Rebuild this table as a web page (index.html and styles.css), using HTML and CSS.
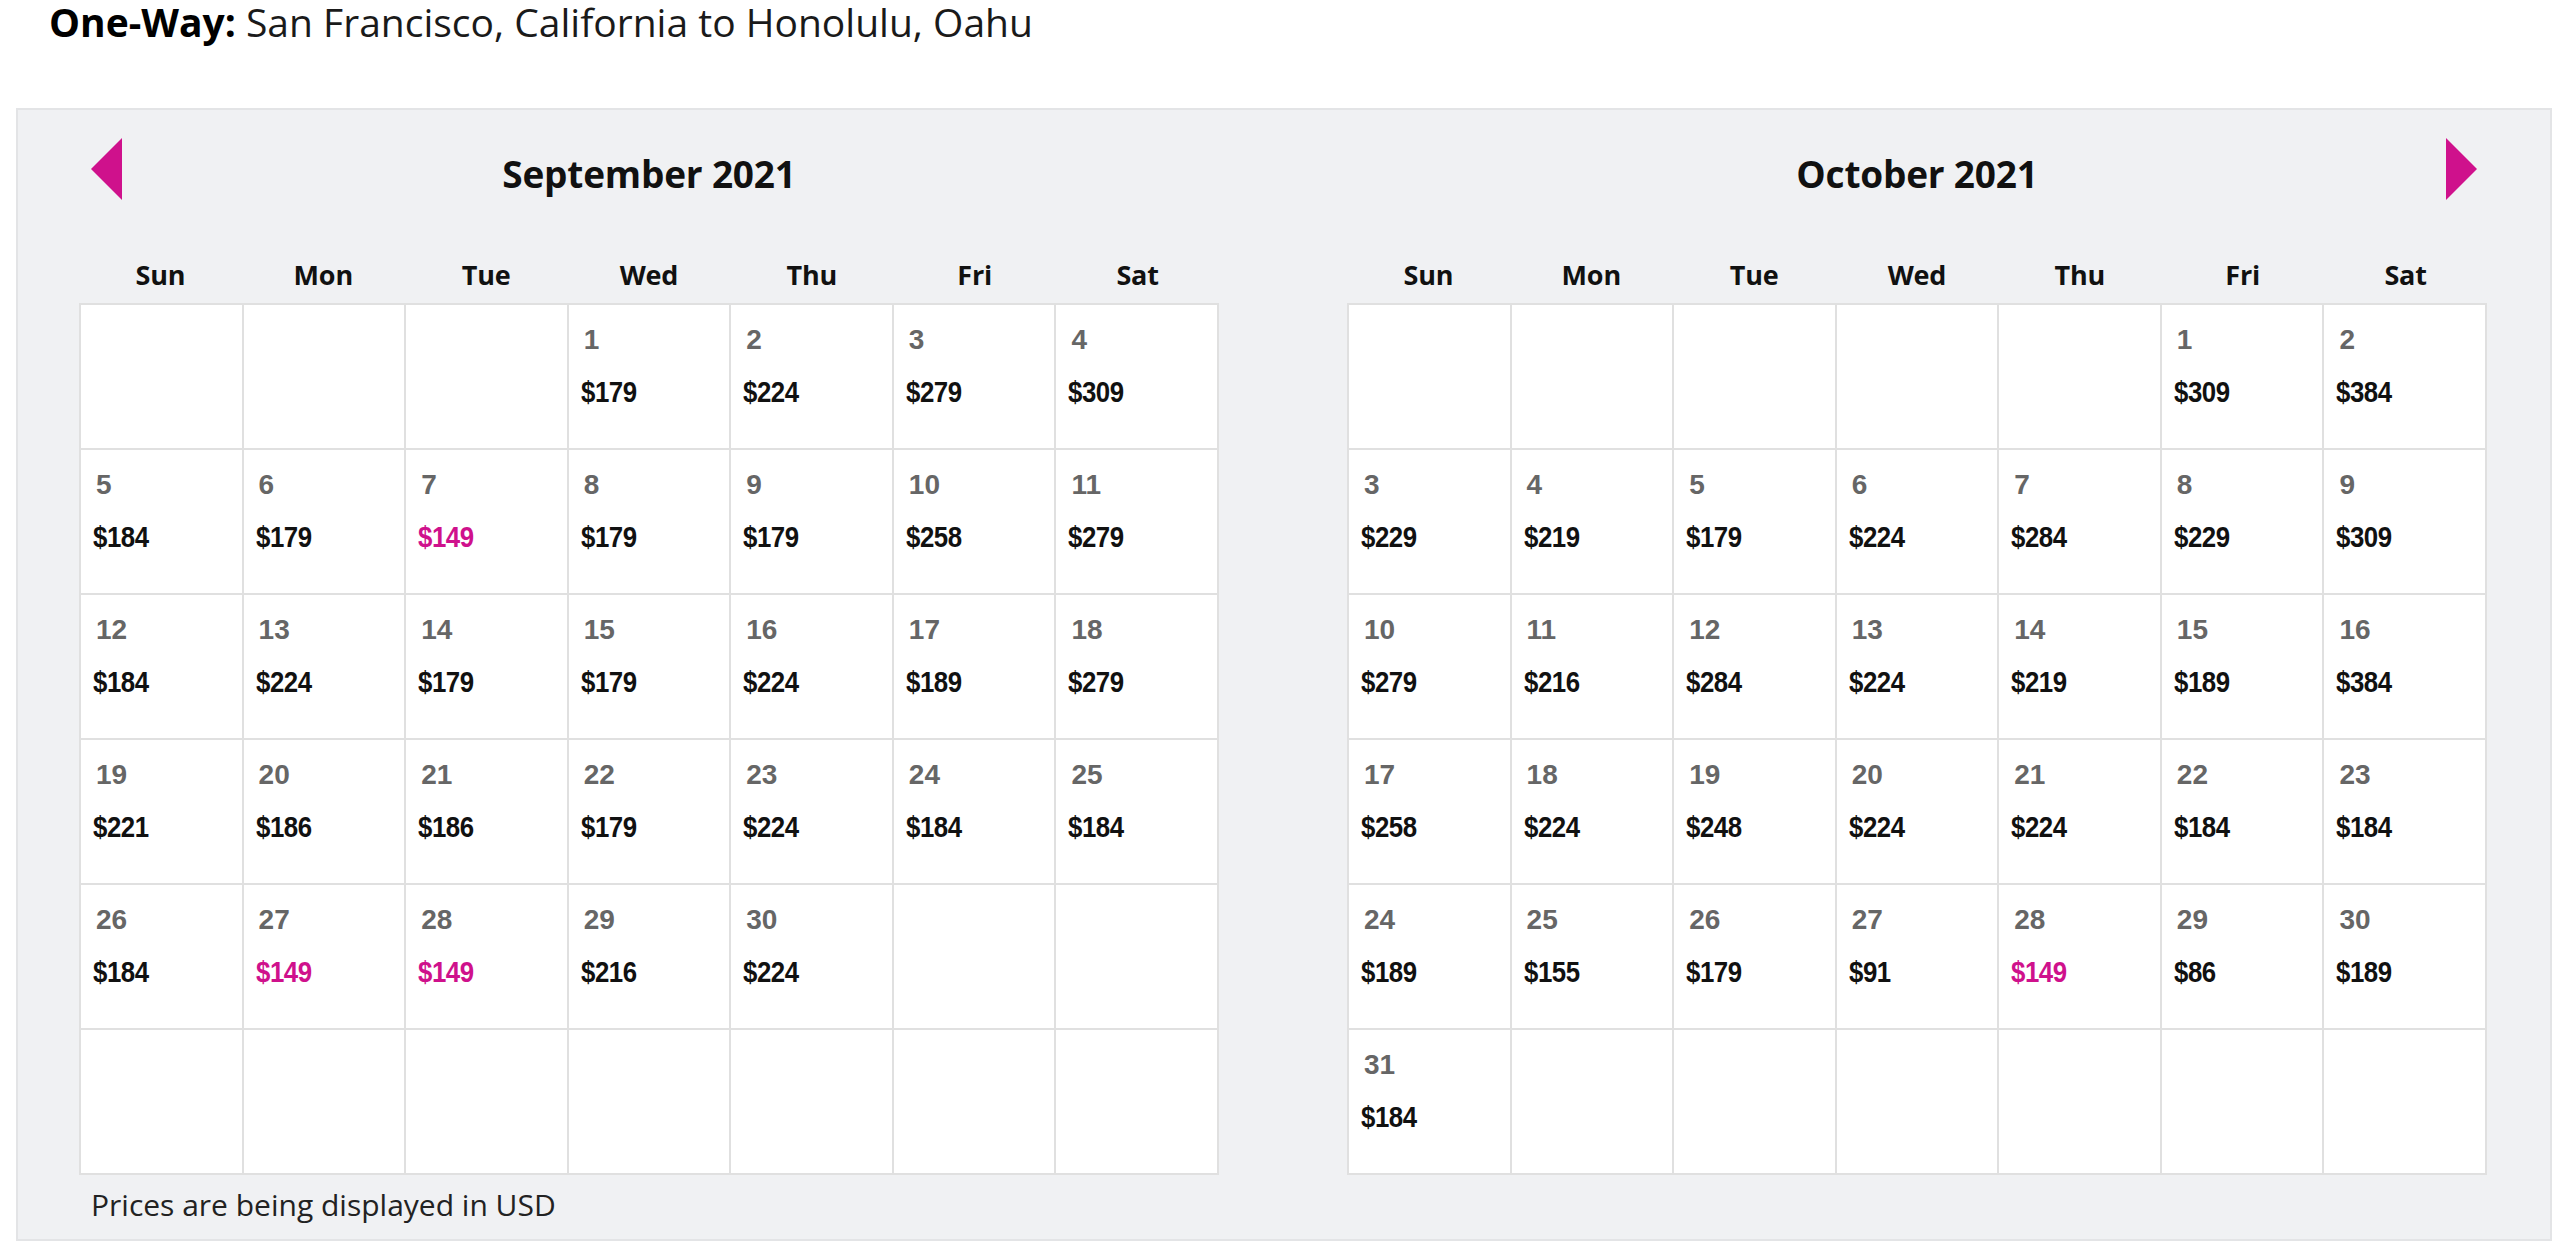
FILE: index.html
```html
<!DOCTYPE html>
<html lang="en">
<head>
<meta charset="utf-8">
<title>Low Fare Calendar</title>
<link rel="stylesheet" href="styles.css">
</head>
<body>
<h1 class="trip"><span class="trip-type">One-Way:</span> San Francisco, California to Honolulu, Oahu</h1>
<section class="panel">
  <div class="month">
    <div class="month-head">
      <span class="nav nav-prev"><svg width="31" height="62" viewBox="0 0 31 62"><polygon points="31,0 0,31 31,62" fill="#cf118c"/></svg></span>
      <h2 class="month-title">September 2021</h2>
      <span class="nav-space"></span>
    </div>
    <div class="dow"><span>Sun</span><span>Mon</span><span>Tue</span><span>Wed</span><span>Thu</span><span>Fri</span><span>Sat</span></div>
    <div class="grid">
      <div class="cell"></div><div class="cell"></div><div class="cell"></div>
      <div class="cell"><div class="d">1</div><div class="p">$179</div></div>
      <div class="cell"><div class="d">2</div><div class="p">$224</div></div>
      <div class="cell"><div class="d">3</div><div class="p">$279</div></div>
      <div class="cell"><div class="d">4</div><div class="p">$309</div></div>
      <div class="cell"><div class="d">5</div><div class="p">$184</div></div>
      <div class="cell"><div class="d">6</div><div class="p">$179</div></div>
      <div class="cell"><div class="d">7</div><div class="p low">$149</div></div>
      <div class="cell"><div class="d">8</div><div class="p">$179</div></div>
      <div class="cell"><div class="d">9</div><div class="p">$179</div></div>
      <div class="cell"><div class="d">10</div><div class="p">$258</div></div>
      <div class="cell"><div class="d">11</div><div class="p">$279</div></div>
      <div class="cell"><div class="d">12</div><div class="p">$184</div></div>
      <div class="cell"><div class="d">13</div><div class="p">$224</div></div>
      <div class="cell"><div class="d">14</div><div class="p">$179</div></div>
      <div class="cell"><div class="d">15</div><div class="p">$179</div></div>
      <div class="cell"><div class="d">16</div><div class="p">$224</div></div>
      <div class="cell"><div class="d">17</div><div class="p">$189</div></div>
      <div class="cell"><div class="d">18</div><div class="p">$279</div></div>
      <div class="cell"><div class="d">19</div><div class="p">$221</div></div>
      <div class="cell"><div class="d">20</div><div class="p">$186</div></div>
      <div class="cell"><div class="d">21</div><div class="p">$186</div></div>
      <div class="cell"><div class="d">22</div><div class="p">$179</div></div>
      <div class="cell"><div class="d">23</div><div class="p">$224</div></div>
      <div class="cell"><div class="d">24</div><div class="p">$184</div></div>
      <div class="cell"><div class="d">25</div><div class="p">$184</div></div>
      <div class="cell"><div class="d">26</div><div class="p">$184</div></div>
      <div class="cell"><div class="d">27</div><div class="p low">$149</div></div>
      <div class="cell"><div class="d">28</div><div class="p low">$149</div></div>
      <div class="cell"><div class="d">29</div><div class="p">$216</div></div>
      <div class="cell"><div class="d">30</div><div class="p">$224</div></div>
      <div class="cell"></div><div class="cell"></div>
      <div class="cell"></div><div class="cell"></div><div class="cell"></div><div class="cell"></div><div class="cell"></div><div class="cell"></div><div class="cell"></div>
    </div>
    <p class="note">Prices are being displayed in USD</p>
  </div>
  <div class="month">
    <div class="month-head">
      <span class="nav-space"></span>
      <h2 class="month-title">October 2021</h2>
      <span class="nav nav-next"><svg width="31" height="62" viewBox="0 0 31 62"><polygon points="0,0 31,31 0,62" fill="#cf118c"/></svg></span>
    </div>
    <div class="dow"><span>Sun</span><span>Mon</span><span>Tue</span><span>Wed</span><span>Thu</span><span>Fri</span><span>Sat</span></div>
    <div class="grid">
      <div class="cell"></div><div class="cell"></div><div class="cell"></div><div class="cell"></div><div class="cell"></div>
      <div class="cell"><div class="d">1</div><div class="p">$309</div></div>
      <div class="cell"><div class="d">2</div><div class="p">$384</div></div>
      <div class="cell"><div class="d">3</div><div class="p">$229</div></div>
      <div class="cell"><div class="d">4</div><div class="p">$219</div></div>
      <div class="cell"><div class="d">5</div><div class="p">$179</div></div>
      <div class="cell"><div class="d">6</div><div class="p">$224</div></div>
      <div class="cell"><div class="d">7</div><div class="p">$284</div></div>
      <div class="cell"><div class="d">8</div><div class="p">$229</div></div>
      <div class="cell"><div class="d">9</div><div class="p">$309</div></div>
      <div class="cell"><div class="d">10</div><div class="p">$279</div></div>
      <div class="cell"><div class="d">11</div><div class="p">$216</div></div>
      <div class="cell"><div class="d">12</div><div class="p">$284</div></div>
      <div class="cell"><div class="d">13</div><div class="p">$224</div></div>
      <div class="cell"><div class="d">14</div><div class="p">$219</div></div>
      <div class="cell"><div class="d">15</div><div class="p">$189</div></div>
      <div class="cell"><div class="d">16</div><div class="p">$384</div></div>
      <div class="cell"><div class="d">17</div><div class="p">$258</div></div>
      <div class="cell"><div class="d">18</div><div class="p">$224</div></div>
      <div class="cell"><div class="d">19</div><div class="p">$248</div></div>
      <div class="cell"><div class="d">20</div><div class="p">$224</div></div>
      <div class="cell"><div class="d">21</div><div class="p">$224</div></div>
      <div class="cell"><div class="d">22</div><div class="p">$184</div></div>
      <div class="cell"><div class="d">23</div><div class="p">$184</div></div>
      <div class="cell"><div class="d">24</div><div class="p">$189</div></div>
      <div class="cell"><div class="d">25</div><div class="p">$155</div></div>
      <div class="cell"><div class="d">26</div><div class="p">$179</div></div>
      <div class="cell"><div class="d">27</div><div class="p">$91</div></div>
      <div class="cell"><div class="d">28</div><div class="p low">$149</div></div>
      <div class="cell"><div class="d">29</div><div class="p">$86</div></div>
      <div class="cell"><div class="d">30</div><div class="p">$189</div></div>
      <div class="cell"><div class="d">31</div><div class="p">$184</div></div>
      <div class="cell"></div><div class="cell"></div><div class="cell"></div><div class="cell"></div><div class="cell"></div><div class="cell"></div>
    </div>
  </div>
</section>
</body>
</html>
```
FILE: styles.css
```css
* { box-sizing: border-box; }
html, body { margin: 0; padding: 0; background: #fff; }
body { font-family: "Open Sans", "Noto Sans", sans-serif; color: #111; }

.trip {
  margin: 0;
  padding-left: 49px;
  font-size: 39px;
  line-height: 43px;
  font-weight: 400;
  color: #1a1a1a;
  letter-spacing: 0;
}
.trip-type { font-weight: 700; color: #000; }

.panel {
  margin: 65px 8px 0 16px;
  background: #f0f1f3;
  border: 2px solid #e3e4e6;
  padding: 28px 63px 15px 61px;
  display: flex;
  gap: 128px;
  align-items: flex-start;
}
.month { flex: 1 1 0; min-width: 0; }

.month-head {
  height: 62px;
  display: grid;
  grid-template-columns: 1fr auto 1fr;
  align-items: center;
}
.nav { display: flex; width: 31px; height: 62px; }
.nav-prev { justify-self: start; margin-left: 12px; }
.nav-next { justify-self: end; margin-right: 10px; }
.nav-space { display: block; }
.month-title {
  margin: 0;
  font-size: 37px;
  line-height: 44px;
  font-weight: 700;
  color: #111;
  letter-spacing: -0.2px;
  position: relative;
  top: 5px;
}

.dow {
  margin-top: 57px;
  margin-bottom: 10px;
  display: grid;
  grid-template-columns: repeat(7, 1fr);
  text-align: center;
  font-size: 27px;
  line-height: 36px;
  font-weight: 700;
  color: #111;
  letter-spacing: -0.2px;
}

.grid {
  display: grid;
  grid-template-columns: repeat(7, 1fr);
  grid-auto-rows: 145px;
  border-top: 2px solid #e0e0e0;
  border-left: 2px solid #e0e0e0;
  background: #fff;
}
.cell {
  background: #fff;
  border-right: 2px solid #e0e0e0;
  border-bottom: 2px solid #e0e0e0;
  padding: 21px 12px 0 12px;
  font-family: "Liberation Sans", Arial, sans-serif;
}
.d {
  font-size: 28px;
  line-height: 28px;
  font-weight: 700;
  color: #666;
  padding-left: 3px;
}
.p {
  display: inline-block;
  margin-top: 23px;
  font-size: 30px;
  line-height: 30px;
  font-weight: 700;
  color: #111;
  letter-spacing: -0.5px;
  transform: scaleX(0.86);
  transform-origin: left center;
}
.p.low { color: #cf118c; }

.note {
  margin: 11px 0 0 12px;
  font-size: 30px;
  line-height: 38px;
  color: #222;
  letter-spacing: 0;
}
```
